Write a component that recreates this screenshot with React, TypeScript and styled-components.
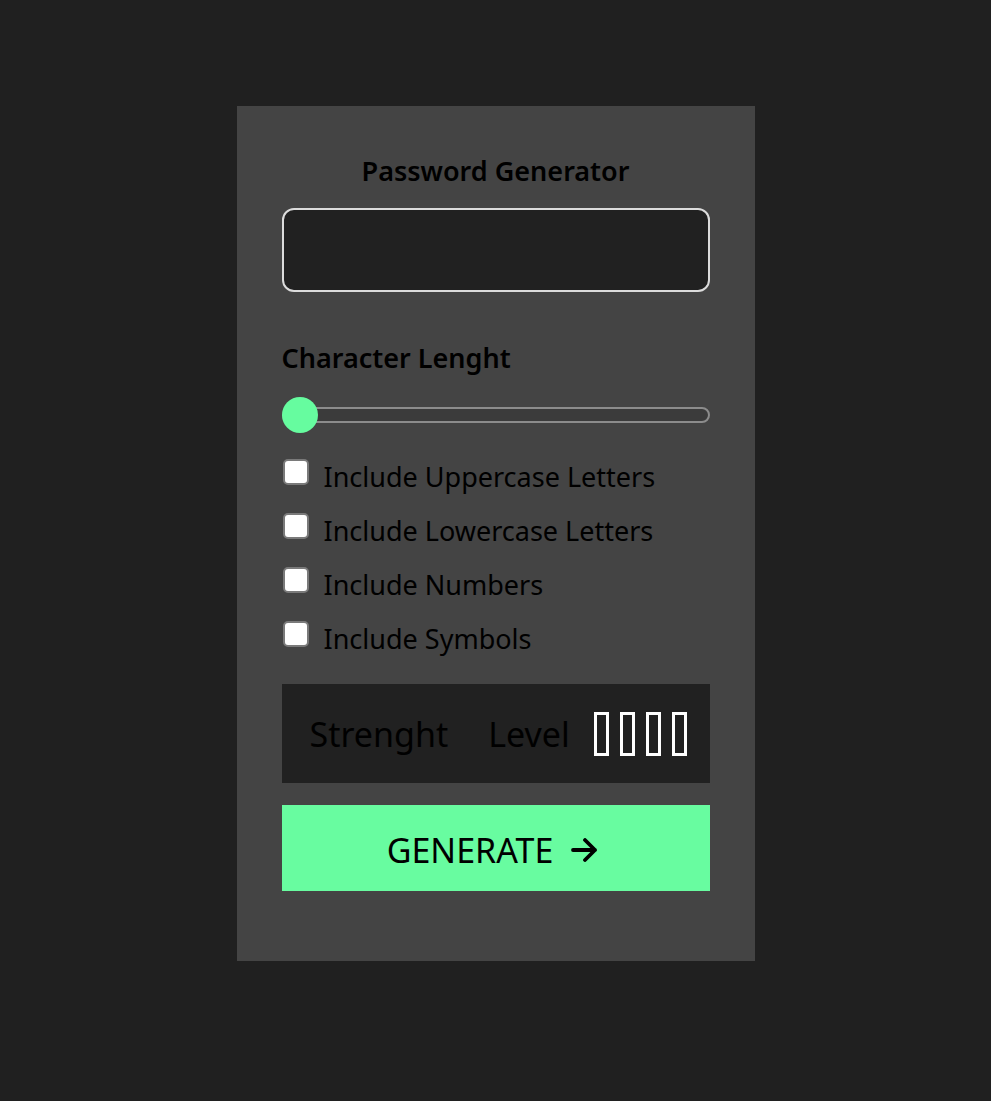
import React, { useState } from 'react';
import styled, { createGlobalStyle } from 'styled-components';

const GlobalStyle = createGlobalStyle`
	* {
		box-sizing: border-box;
	}

	body {
		margin: 0;
		background-color: #202020;
		font-family: 'Noto Sans', 'Open Sans', sans-serif;
		color: #000;
	}
`;

const options = [
	'Include Uppercase Letters',
	'Include Lowercase Letters',
	'Include Numbers',
	'Include Symbols'
];

function App() {
	const [length, setLength] = useState<number>(0);
	const [checked, setChecked] = useState<boolean[]>([false, false, false, false]);

	const handleCheck = (index: number) => {
		setChecked(checked.map((value, i) => (i === index ? !value : value)));
	};

	return (
		<Page>
			<GlobalStyle />
			<Card>
				<Title>Password Generator</Title>
				<PasswordBox readOnly />
				<SectionLabel>Character Lenght</SectionLabel>
				<Slider
					type="range"
					min={0}
					max={20}
					value={length}
					onChange={(e) => setLength(Number(e.target.value))}
				/>
				<OptionList>
					{options.map((option, index) => (
						<OptionRow key={option}>
							<CheckBox
								type="checkbox"
								checked={checked[index]}
								onChange={() => handleCheck(index)}
							/>
							<OptionText>{option}</OptionText>
						</OptionRow>
					))}
				</OptionList>
				<StrengthBox>
					<StrengthText>Strenght</StrengthText>
					<LevelText>Level</LevelText>
					<Bars>
						{[0, 1, 2, 3].map((bar) => (
							<Bar key={bar} />
						))}
					</Bars>
				</StrengthBox>
				<GenerateButton>
					GENERATE
					<svg width="27" height="24" viewBox="0 0 27 24" fill="none">
						<path
							d="M2 12h22M14 2l10 10-10 10"
							stroke="#000"
							strokeWidth="3.8"
							strokeLinecap="round"
							strokeLinejoin="round"
						/>
					</svg>
				</GenerateButton>
			</Card>
		</Page>
	);
}

const Page = styled.div`
	min-height: 1101px;
	padding-top: 106px;
	display: flex;
	justify-content: center;
	align-items: flex-start;
`;

const Card = styled.div`
	width: 518px;
	padding: 48px 45px 70px;
	background-color: #444444;
	display: flex;
	flex-direction: column;
`;

const Title = styled.h1`
	margin: 0 0 20px;
	height: 34px;
	line-height: 34px;
	font-size: 27px;
	font-weight: 600;
	text-align: center;
`;

const PasswordBox = styled.input`
	width: 100%;
	height: 84px;
	border: 2px solid #dcdcdc;
	border-radius: 12px;
	background-color: #212121;
	color: #fff;
	font-size: 24px;
	padding: 0 16px;
	outline: none;
`;

const SectionLabel = styled.div`
	margin-top: 49px;
	height: 34px;
	line-height: 34px;
	font-size: 27px;
	font-weight: 600;
`;

const Slider = styled.input`
	-webkit-appearance: none;
	appearance: none;
	width: 100%;
	height: 36px;
	margin: 22px 0 0;
	background: transparent;
	outline: none;

	&::-webkit-slider-runnable-track {
		height: 16px;
		border: 2px solid #8c8c8c;
		border-radius: 8px;
		background-color: #3b3b3b;
	}

	&::-webkit-slider-thumb {
		-webkit-appearance: none;
		appearance: none;
		width: 36px;
		height: 36px;
		margin-top: -12px;
		margin-left: -2px;
		border: none;
		border-radius: 50%;
		background-color: #66fc9f;
		cursor: pointer;
	}
`;

const OptionList = styled.div`
	margin-top: 17px;
	display: flex;
	flex-direction: column;
`;

const OptionRow = styled.label`
	height: 54px;
	display: flex;
	align-items: flex-start;
	gap: 15px;
	cursor: pointer;
`;

const CheckBox = styled.input`
	-webkit-appearance: none;
	appearance: none;
	flex-shrink: 0;
	width: 26px;
	height: 26px;
	margin: 9px 0 0 1px;
	border: 2px solid #7a7a7a;
	border-radius: 5px;
	background-color: #fff;
	cursor: pointer;

	&:checked {
		background-color: #66fc9f;
	}
`;

const OptionText = styled.span`
	line-height: 54px;
	font-size: 27px;
	white-space: nowrap;
`;

const StrengthBox = styled.div`
	margin-top: 18px;
	height: 99px;
	padding: 0 23px 0 28px;
	background-color: #212121;
	display: flex;
	align-items: center;
`;

const StrengthText = styled.span`
	font-size: 34px;
`;

const LevelText = styled.span`
	margin-left: 40px;
	font-size: 34px;
`;

const Bars = styled.div`
	margin-left: auto;
	display: flex;
	gap: 11px;
`;

const Bar = styled.span`
	width: 15px;
	height: 44px;
	border: 3px solid #fff;
`;

const GenerateButton = styled.button`
	margin-top: 22px;
	height: 86px;
	padding: 4px 6px 0 0;
	border: none;
	background-color: #68fca0;
	color: #000;
	font-family: inherit;
	font-size: 34px;
	display: flex;
	justify-content: center;
	align-items: center;
	gap: 18px;
	cursor: pointer;
`;

export default App;
